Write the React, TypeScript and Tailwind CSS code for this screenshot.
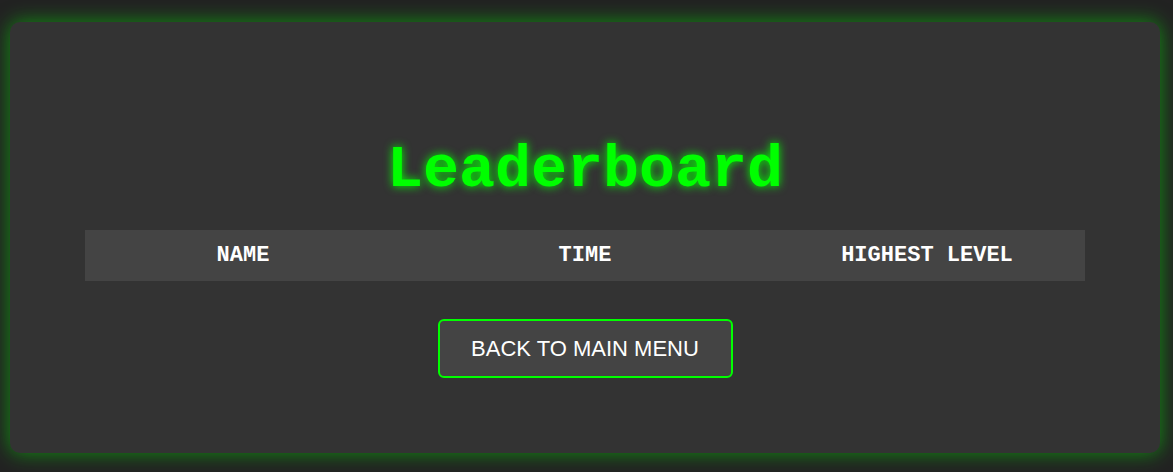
export default function App() {
  return (
    <div className="w-[1173px] h-[472px] bg-[#222222] pt-[22px] pl-[10px] overflow-hidden">
      <div className="w-[1150px] h-[431px] bg-[#333333] rounded-[10px] shadow-[0_0_20px_rgba(0,255,0,0.5)] flex flex-col items-center pt-[114px]">
        <h1
          className="text-[60px] leading-[68px] font-bold text-[#00ff00] [text-shadow:0_0_10px_#00ff00]"
          style={{ fontFamily: '"Liberation Mono", "Courier New", monospace' }}
        >
          Leaderboard
        </h1>
        <div
          className="mt-[26px] w-[1000px] h-[51px] bg-[#444444] grid grid-cols-[316px_368px_316px] items-center text-white font-bold text-[22px]"
          style={{ fontFamily: '"Liberation Mono", "Courier New", monospace' }}
        >
          <div className="text-center">NAME</div>
          <div className="text-center">TIME</div>
          <div className="text-center">HIGHEST LEVEL</div>
        </div>
        <button
          className="mt-[38px] w-[295px] h-[59px] border-2 border-[#00ff00] rounded-[6px] bg-[#444444] text-white text-[22px]"
          style={{ fontFamily: '"Liberation Sans", Arial, sans-serif' }}
        >
          BACK TO MAIN MENU
        </button>
      </div>
    </div>
  );
}
